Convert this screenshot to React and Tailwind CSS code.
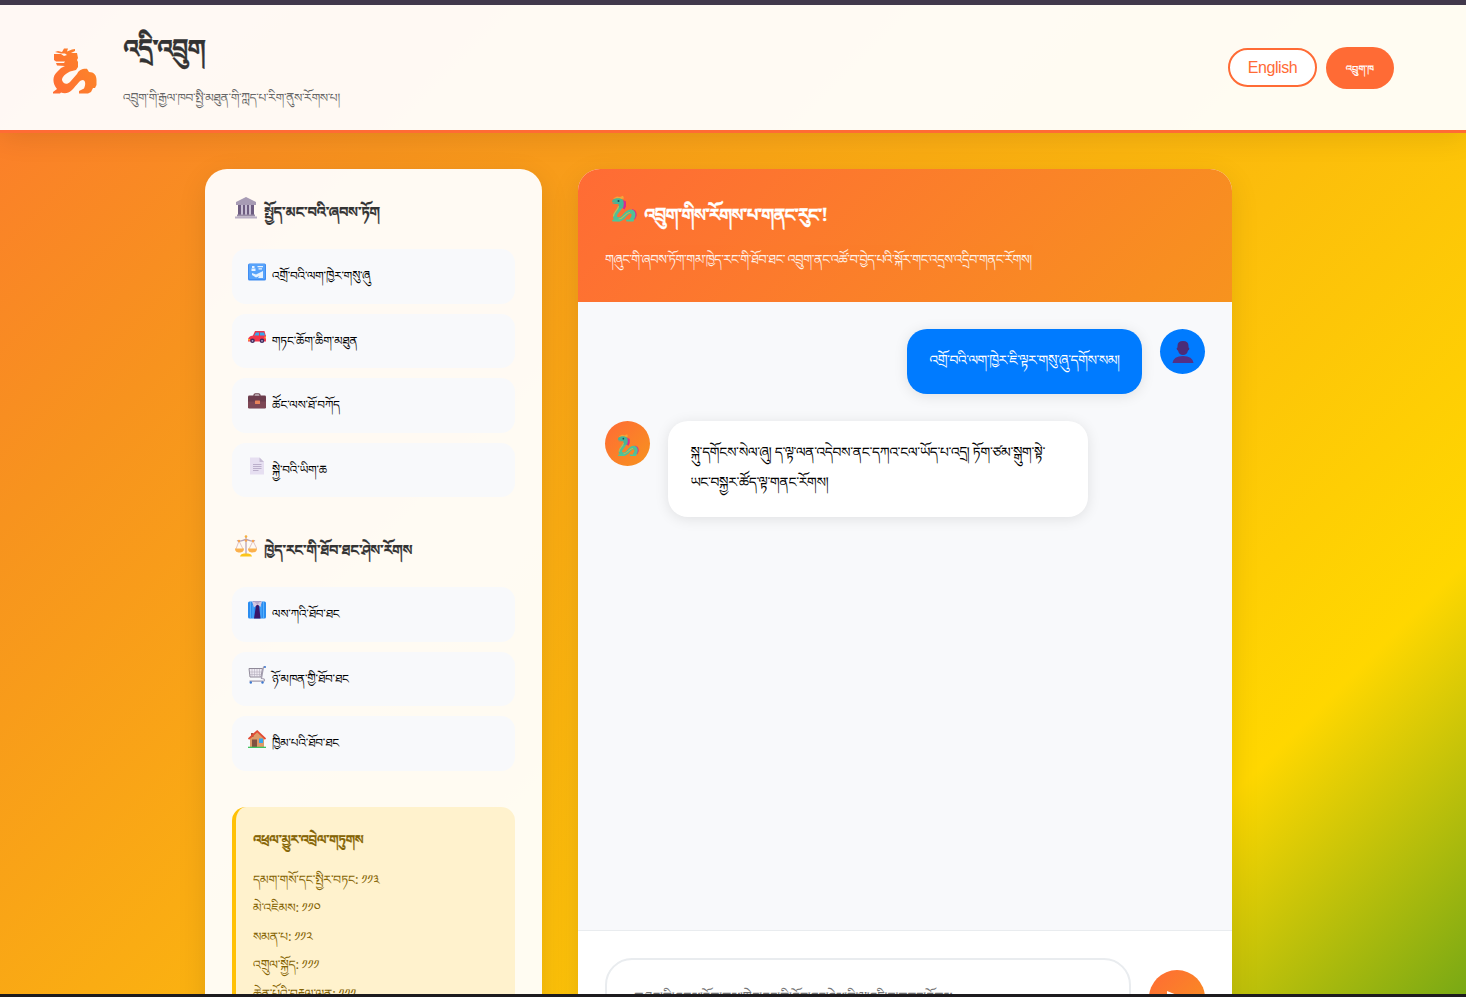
import React from "react";

const TIB = "font-['Noto_Serif_Tibetan','Noto_Sans_Tibetan','Microsoft_Himalaya','Jomolhari','Liberation_Sans',sans-serif]";

function Dragon({ className }) {
  return (
    <svg viewBox="0 0 26 26" className={className} fill="none" strokeLinecap="round" strokeLinejoin="round">
      <path d="M12 4.500 15 6v5l-1.500 3-3-2z" fill="#d62c8f" />
      <path d="M21 13.500c4 1 5 4 4.500 7L24 24l-3-1z" fill="#d62c8f" />
      <path d="M2 3 6 1l3 .5L12 .3l1 2.700-4 1z" fill="#f4a63a" />
      <path d="M9.500 11C8 15.500 3.500 17 4 21.500c1 3 5.500 3 8 .5S16 16 19.500 16s4 4.500 1.500 7.500" stroke="#4fbf98" strokeWidth="4" />
      <path d="M1.500 4.500C4 2 10 2 12 4.500c1.500 3 .5 6 0 8l-4.500.5c.5-2 .5-3 0-4.500H2.500L1 8l4-.5-4-.8z" fill="#45b597" />
      <path d="M7.500 11c-1 4-5 6-5 9.500M8 23.500c5-.5 6-6 10.500-6.500" stroke="#c9b84f" strokeWidth="1.200" />
      <path d="M2 25h7M16 25h6" stroke="#4cc79a" strokeWidth="1.800" />
      <circle cx="7.500" cy="5.500" r="1" fill="#1f4860" />
    </svg>
  );
}

function LogoDragon() {
  return (
    <svg viewBox="0 0 44 46" className="block h-[46px] w-[44px]">
      <defs>
        <linearGradient id="logo" x1="0" y1="0.8" x2="1" y2="0.3">
          <stop offset="0" stopColor="#ff6f34" />
          <stop offset="1" stopColor="#fc8628" />
        </linearGradient>
      </defs>
      <path
        fill="url(#logo)"
        d="M2 4 5 3 9 4 11 .5 15 .5 14 3.500 19 1.500 22 1 22 3 18 5 24 5 25 10 24 12 25 14 25 19 23 22 17 23.500C12 26 9 29 9 32C10 36 14 37 17 34L24 26C26 22 29 20.500 34 20.800L36 24C41 24 43.500 27 43.500 32V37L42 40H40L38 44 35 45.500H26L26 43 31 40.500C32.500 37 33 33 30 32C26.500 32 24 37 19 42C15 46 11 45.500 8 44.500L7 45.500H0L0 44 4 41C-1 35-.5 28 4 24L8 20 12 18 4 17.500 3 15 11 15 12 13.500 3 13.500 1 12 1 6 8 6 11 8 14 7 12 5.500 8 5.500Z"
      />
    </svg>
  );
}

function Icon({ name }) {
  const cls = "block h-[18px] w-[18px] mt-px";
  if (name === "bank")
    return (
      <svg viewBox="0 0 22 22" className="mt-px block h-[22px] w-[22px]">
        <path d="M11 0 1 5v3h20V5z" fill="#a79bb4" />
        <path d="M3 8h16v10H3z" fill="#c9bfd4" />
        <path d="M3 8h3v10H3zM8 8h2v10H8zM12 8h2v10h-2zM16 8h3v10h-3z" fill="#6d5c80" />
        <path d="M2 17.5h18v2H2z" fill="#998ca6" />
        <path d="M0 19.5h22v2H0z" fill="#b9aec4" />
      </svg>
    );
  if (name === "scale")
    return (
      <svg viewBox="0 0 22 22" className="mt-px block h-[22px] w-[22px]">
        <path d="M11 1v18M2 5.5c4 2 6-1 9-1s5 3 9 1" stroke="#b9a3b8" strokeWidth="1.3" fill="none" />
        <path d="M4 6 1 14M4 6l4 8M18 6l-4 8M18 6l4 8" stroke="#d3a9ae" strokeWidth=".7" />
        <path d="M0 13.5h9c0 3-2 4-4.500 4S0 16.500 0 13.500zM13 13.500h9c0 3-2 4-4.500 4s-4.500-1-4.500-4z" fill="#fbb04c" />
        <path d="M5 21.500c1-3 3-3 6-3s5 0 6 3z" fill="#fcc51b" />
        <circle cx="11" cy="1.500" r="1.300" fill="#f8b03c" />
        <circle cx="11" cy="5.500" r="1.300" fill="#f8a34c" />
        <circle cx="4" cy="6" r="1.200" fill="#f8a34c" />
        <circle cx="18" cy="6" r="1.200" fill="#f8a34c" />
      </svg>
    );
  if (name === "passport")
    return (
      <svg viewBox="0 0 18 18" className={cls}>
        <rect y=".5" width="18" height="17" rx="1.500" fill="#3f8df2" />
        <rect x="1" y="1" width="16" height="15" rx="1" fill="#58a3fa" />
        <path d="M4 3h2.500v2H4zM3.500 5.500h4V8h-4zM9.500 3H15v1.300H9.500zM10.500 5.300H14V6.500h-3.500zM4 10l4 1.500 7-3.500V15h-5l1.500-2L8 14.500 4 12z" fill="#e6f2ff" />
      </svg>
    );
  if (name === "car")
    return (
      <svg viewBox="0 0 18 18" className={cls}>
        <path d="M4.500 8.500 7 3h9.500l1.500 5.500z" fill="#e9374f" />
        <path d="M6 8 8 4.500h3V8zM12 4.500h4L17.200 8H12z" fill="#34a9ec" />
        <path d="M0 11c1-2.500 3-3.500 6-3.500h12v6H0z" fill="#f2354b" />
        <path d="M0 11h2v1.500H0zM16.500 8.500H18v2h-1.500z" fill="#ffa63d" />
        <circle cx="4.500" cy="12.800" r="2.300" fill="#3f2a5c" />
        <circle cx="14" cy="12.800" r="2.300" fill="#3f2a5c" />
        <circle cx="4.500" cy="12.800" r=".9" fill="#b7a5cc" />
        <circle cx="14" cy="12.800" r=".9" fill="#b7a5cc" />
      </svg>
    );
  if (name === "briefcase")
    return (
      <svg viewBox="0 0 18 18" className={cls}>
        <path d="M6 4V3Q6 1.800 7.500 1.800h3Q12 1.800 12 3v1" stroke="#6d4450" strokeWidth="1.200" fill="none" />
        <rect y="3.500" width="18" height="13" rx="1.300" fill="#6c3d4d" />
        <path d="M0 9.500h18v6.500H0z" fill="#7d4755" />
        <rect x="7" y="8.500" width="5" height="3.500" rx=".5" fill="#e8835a" />
      </svg>
    );
  if (name === "doc")
    return (
      <svg viewBox="0 0 18 18" className={cls}>
        <path d="M2 .5h9.500L16 5v12.500H2z" fill="#e6dff1" />
        <path d="M11.500.5 16 5h-4.500z" fill="#c6bcd4" />
        <path d="M5 7.500h8.500M5 9.500h8.500M5 11.500h8.500M5 13.500h5.500" stroke="#b5a9c6" strokeWidth=".9" />
      </svg>
    );
  if (name === "shirt")
    return (
      <svg viewBox="0 0 18 18" className={cls}>
        <rect y=".5" width="18" height="17" rx="1.500" fill="#2b8df0" />
        <path d="M2.500 1v16M5 4v13M13 4v13M15.500 1v16" stroke="#57b0fb" strokeWidth="1" />
        <path d="M5 .5h8l-2 4 1.500 13h-6.500L8 4.500z" fill="#3a1668" />
        <path d="M4 .5h10l-1.500 5.500L9.500 3.500 6 6.500z" fill="#d4c8e2" />
        <path d="M6 .5h6L9.500 4z" fill="#b9abcc" />
      </svg>
    );
  if (name === "cart")
    return (
      <svg viewBox="0 0 18 18" className={cls}>
        <path d="M1 2.500h13.500L13 11H2z" fill="#eeeaf2" stroke="#8f8998" strokeWidth="1" />
        <path d="M4 3v8M6.500 3v8M9 3v8M11.500 3v8M1.500 6h12M1.500 8.500h12" stroke="#b5aebd" strokeWidth=".6" />
        <path d="M17 .8 15.500 1 13.500 12.500q3 0 3 1.500t-2 1.200H1.500" stroke="#a39cae" strokeWidth="1.200" fill="none" />
        <circle cx="2.800" cy="16.500" r="1.200" fill="#3c78d0" />
        <circle cx="14.500" cy="16.500" r="1.200" fill="#3c78d0" />
        <circle cx="17" cy="1" r="1" fill="#3c78d0" />
      </svg>
    );
  return (
    <svg viewBox="0 0 18 18" className={cls}>
      <path d="M2 8 9 1.500 16 8v9H2z" fill="#dd9b68" />
      <path d="M3 3h2.500v4H3z" fill="#a5563f" />
      <path d="M4 9.500h5V17H4z" fill="#80503f" />
      <rect x="11" y="8.500" width="4" height="4.500" fill="#35a7ef" />
      <path d="M.5 9 9.200 1.200 17.500 9" stroke="#e24b34" strokeWidth="1.800" fill="none" />
      <path d="M0 16.700h18v1.300H0z" fill="#3fc45f" />
    </svg>
  );
}

function Heading({ icon, children }) {
  return (
    <div className="flex h-[28px] items-start pl-[3px]">
      <Icon name={icon} />
      <h3 className={`ml-[7px] mt-[7px] whitespace-nowrap text-[14.5px] font-bold leading-[28px] tracking-[-0.58px] text-[#333] [-webkit-text-stroke:0.2px_#333] ${TIB}`}>{children}</h3>
    </div>
  );
}

function Service({ icon, children }) {
  return (
    <li className="flex h-[54.5px] items-start rounded-[14px] bg-[#f8f9fb] pl-[16px] pt-[13px]">
      <Icon name={icon} />
      <span className={`ml-[6px] mt-[3px] whitespace-nowrap text-[12px] leading-[28px] tracking-[-0.16px] text-black ${TIB}`}>{children}</span>
    </li>
  );
}

const SERVICES = [
  ["passport", "འགྲོ་བའི་ལག་ཁྱེར་གསུ་ཞུ"],
  ["car", "གཏང་ཆོག་ཆིག་མཐུན"],
  ["briefcase", "ཚོང་ལས་ཐོ་བཀོད"],
  ["doc", "སྐྱེ་བའི་ཡིག་ཆ"],
];
const RIGHTS = [
  ["shirt", "ལས་ཀའི་ཐོབ་ཐང"],
  ["cart", "ཉོ་མཁན་གྱི་ཐོབ་ཐང"],
  ["house", "ཁྱིམ་པའི་ཐོབ་ཐང"],
];
const CONTACTS = ["དམག་གསོ་དང་སྤྱིར་བཏང: ༡༡༣", "མེ་འཇིམས: ༡༡༠", "སམན་པ: ༡༡༢", "འགྲུལ་སྐྱོད: ༡༡༡", "ཆེན་པོའི་བརྡལ་ལན: ༡༡༡"];

export default function App() {
  return (
    <div className="flex h-[997px] w-[1466px] flex-col overflow-hidden bg-[#1d1b1e] font-['Liberation_Sans',sans-serif]">
      <div className="h-[5px] shrink-0 bg-[#41384b]" />
      <div className="h-[989px] shrink-0 overflow-hidden">
        <div className="flex h-[1267px] flex-col bg-[linear-gradient(135deg,#ff6b35_-11%,#f7931e_19%,#ffd700_74%,#228b22_100%)]">
          <header className="relative z-10 flex h-[128px] shrink-0 items-center border-b-[3px] border-[#ff6b35] bg-white/95 pl-[53px] pr-[72px] shadow-[0_4px_27px_rgba(0,0,0,0.1)]">
            <div className="mt-[7px]"><LogoDragon /></div>
            <div className="ml-[26px] flex h-full flex-col">
              <h1 className={`mt-[28px] whitespace-nowrap text-[25px] font-bold leading-[46px] tracking-[-1.4px] text-[#333] [-webkit-text-stroke:0.3px_#333] ${TIB}`}>འདྲི་འབྲུག</h1>
              <p className={`mt-[9px] whitespace-nowrap text-[12.3px] leading-[28px] tracking-[-0.36px] text-[#666] ${TIB}`}>འབྲུག་གི་རྒྱལ་ཁབ་སྤྱི་མཐུན་གི་ཀླད་པ་རིག་ནུས་རོགས་པ།</p>
            </div>
            <div className="ml-auto flex items-center gap-[9px]">
              <button className="h-[39px] w-[89px] rounded-[20px] border-2 border-[#ff6b35] bg-white text-[16px] tracking-[-0.4px] text-[#ff6b35]">English</button>
              <button className={`h-[42px] w-[68px] rounded-[21px] bg-[#ff6b35] pt-[10px] text-[9.6px] font-medium text-white [-webkit-text-stroke:0.2px_#fff] ${TIB}`}>འབྲུག་ཁ</button>
            </div>
          </header>

          <main className="flex grow items-start gap-[36px] pl-[205px] pt-[36px]">
            <aside className="h-[1062px] w-[337px] rounded-[22px] bg-white/95 px-[27px] pt-[27px] shadow-[0_8px_29px_rgba(0,0,0,0.1)]">
              <Heading icon="bank">སྤྱོད་མང་བའི་ཞབས་ཏོག</Heading>
              <ul className="mt-[25px] flex flex-col gap-[10px]">
                {SERVICES.map(([i, t]) => <Service key={t} icon={i}>{t}</Service>)}
              </ul>
              <div className="mt-[37px]"><Heading icon="scale">ཁྱེད་རང་གི་ཐོབ་ཐང་ཤེས་རོགས</Heading></div>
              <ul className="mt-[25px] flex flex-col gap-[10px]">
                {RIGHTS.map(([i, t]) => <Service key={t} icon={i}>{t}</Service>)}
              </ul>
              <section className="mt-[36px] h-[260px] rounded-[14px] border-l-4 border-[#ffc107] bg-[#fff2cd] pl-[17px] pt-[23px] text-[#856404]">
                <h4 className={`whitespace-nowrap text-[13px] font-bold leading-[28px] tracking-[-0.64px] [-webkit-text-stroke:0.2px_#856404] ${TIB}`}>འཕྲལ་མྱུར་འབྲེལ་གཏུགས</h4>
                <div className="mt-[12px]">
                  {CONTACTS.map((c) => <p key={c} className={`whitespace-nowrap text-[12.5px] leading-[28.5px] tracking-[-0.22px] ${TIB}`}>{c}</p>)}
                </div>
              </section>
            </aside>

            <section className="flex h-[1062px] w-[654px] flex-col overflow-hidden rounded-[22px] bg-white shadow-[0_8px_29px_rgba(0,0,0,0.1)]">
              <div className="h-[133px] shrink-0 bg-[linear-gradient(135deg,#ff6b35,#f7931e)] pl-[27px] pt-[26px] text-white">
                <div className="flex h-[36px] items-start pl-[6px]">
                  <Dragon className="block h-[27px] w-[26px]" />
                  <h2 className={`ml-[7px] mt-[7px] whitespace-nowrap text-[18px] font-bold leading-[36px] tracking-[-1.35px] [-webkit-text-stroke:0.3px_#fff] ${TIB}`}>འབྲུག་གིས་རོགས་པ་གནང་རུང་!</h2>
                </div>
                <p className={`mt-[18px] whitespace-nowrap text-[13px] leading-[30px] tracking-[-0.53px] opacity-90 ${TIB}`}>གཞུང་གི་ཞབས་ཏོག་གམ་ཁྱེད་རང་གི་ཐོབ་ཐང་ འབྲུག་ནང་འཚོ་བ་བྱེད་པའི་སྐོར་གང་འདྲས་འདྲིབ་གནང་རོགས།</p>
              </div>
              <div className="flex h-[629px] shrink-0 flex-col gap-[27px] border-b border-[#e9ecef] bg-[#f8f9fb] px-[27px] pt-[27px]">
                <div className="flex items-start justify-end gap-[18px]">
                  <div className={`h-[65px] w-[235px] whitespace-nowrap rounded-[20px] bg-[#007bff] pt-[20px] text-center text-[14px] leading-[30px] tracking-[-0.52px] text-white shadow-[0_2px_14px_rgba(0,0,0,0.1)] ${TIB}`}>འགྲོ་བའི་ལག་ཁྱེར་ཇི་ལྟར་གསུ་ཞུ་དགོས་སམ།</div>
                  <div className="flex h-[45px] w-[45px] items-center justify-center rounded-full bg-[#007bff]">
                    <svg viewBox="0 0 22 22" className="h-[22px] w-[22px]">
                      <path d="M5.500 5Q5.500 0 11 0t5.500 5v1.500q1 .2 .8 1.500t-1.300 1.500Q15 14 11 14T6 9.500Q5 9.300 4.700 8T5.500 6.500z" fill="#4b2c78" />
                      <path d="M.5 22q1-7 10.500-7t10.500 7z" fill="#533085" />
                    </svg>
                  </div>
                </div>
                <div className="flex items-start gap-[18px]">
                  <div className="flex h-[45px] w-[45px] items-center justify-center rounded-full bg-[linear-gradient(135deg,#ff6b35,#f7931e)] pt-[3px]">
                    <Dragon className="h-[22px] w-[22px]" />
                  </div>
                  <div className={`h-[96px] w-[420px] rounded-[20px] bg-white pl-[22.500px] pt-[20px] text-[14px] leading-[30px] tracking-[-0.38px] text-black shadow-[0_2px_14px_rgba(0,0,0,0.1)] ${TIB}`}>
                    <p className="whitespace-nowrap">སྐུ་དགོངས་སེལ་ཞུ། ད་ལྟ་ལན་འདེབས་ནང་དཀའ་ངལ་ཡོད་པ་འདྲ། ཏོག་ཙམ་སྒུག་སྟེ་</p>
                    <p className="whitespace-nowrap">ཡང་བསྐྱར་ཚོད་ལྟ་གནང་རོགས།</p>
                  </div>
                </div>
              </div>
              <div className="flex grow items-start gap-[18px] bg-white px-[27px] pt-[27px]">
                <div className={`h-[80px] w-[526px] overflow-hidden whitespace-nowrap rounded-[27px] border-2 border-[#e9ecef] pl-[27px] pt-[26px] text-[13.7px] leading-[30px] tracking-[-0.4px] text-[#757575] ${TIB}`}>གཞུང་གི་ཞབས་ཏོག་གམ་ཁྱེད་རང་གི་ཐོབ་ཐང་ཤེས་ནི་ལུ་འདྲི་བ་གནང་རོགས</div>
                <button className="mt-[12px] flex h-[56px] w-[56px] justify-center rounded-full bg-[linear-gradient(135deg,#ff6b35,#f7931e)] pt-[20px]">
                  <svg viewBox="0 0 20 18" className="h-[18px] w-[20px]" fill="#fff"><path d="M0 1 20 9 0 17V11L12 9 0 7z" /></svg>
                </button>
              </div>
            </section>
          </main>
        </div>
      </div>
      <div className="h-[3px] shrink-0 bg-[#1d1b1e]" />
    </div>
  );
}
